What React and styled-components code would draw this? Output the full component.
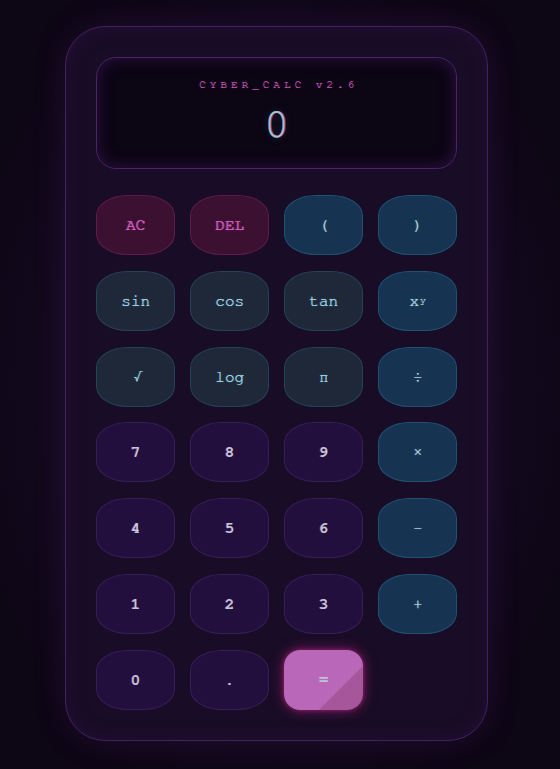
import React from 'react'
import styled, { createGlobalStyle } from 'styled-components'

const Global = createGlobalStyle`
  html, body {
    margin: 0;
    padding: 0;
    background: #0e0717;
  }
  #root {
    min-height: 769px;
  }
`

const mono = `'FreeMono', 'Liberation Mono', 'Courier New', monospace`

const Page = styled.div`
  min-height: 769px;
  box-sizing: border-box;
  padding: 26px 0 0 65px;
  background:
    radial-gradient(ellipse 320px 440px at 276px 384px, #1c0e2a 0%, #140a20 60%, #0d0615 100%);
  font-family: ${mono};
`

const Shell = styled.div`
  width: 423px;
  box-sizing: border-box;
  padding: 30px;
  border: 1.5px solid #44205e;
  border-radius: 40px;
  background: #190c26;
  box-shadow: 0 0 30px rgba(90, 30, 120, 0.25), inset 0 0 20px rgba(60, 20, 90, 0.3);
  display: flex;
  flex-direction: column;
  gap: 26px;
`

const Display = styled.div`
  height: 112px;
  box-sizing: border-box;
  border: 1px solid #4c2366;
  border-radius: 20px;
  background: #0b0514;
  box-shadow: inset 0 0 16px rgba(70, 25, 100, 0.6);
  display: flex;
  flex-direction: column;
  align-items: center;
  padding-top: 21px;
`

const Title = styled.div`
  font-size: 11px;
  line-height: 12px;
  letter-spacing: 4px;
  color: #c35ab5;
  margin-left: 4px;
  text-shadow: 0.4px 0 currentColor, 0 0 4px rgba(200, 80, 180, 0.4);
`

const Readout = styled.div`
  margin-top: 12px;
  font-size: 42px;
  line-height: 1;
  color: #a9c2cf;
  text-shadow: 1px 0 rgba(220, 70, 170, 0.7), -0.5px 0 rgba(140, 200, 220, 0.6),
    0 0 8px rgba(120, 200, 230, 0.25);
`

const Keys = styled.div`
  display: grid;
  grid-template-columns: repeat(4, 79px);
  grid-auto-rows: 60px;
  column-gap: 15px;
  row-gap: 15.8px;
`

const tones = {
  clear: { bg: '#3b1030', border: '#5e1c4c', color: '#cf5fbe', weight: 400, shadow: '0.7px 0 currentColor, -0.3px 0 currentColor, 0 0 4px rgba(210, 80, 190, 0.35)' },
  op: { bg: '#163451', border: '#1f5270', color: '#b0cedc', weight: 400, shadow: '0.5px 0 currentColor, 0 0 3px rgba(160, 210, 230, 0.3)' },
  fn: { bg: '#1f2838', border: '#22435a', color: '#9dd2e4', weight: 400, shadow: '0.5px 0 currentColor, 0 0 3px rgba(120, 200, 230, 0.3)' },
  num: { bg: '#230f3d', border: '#3a1c56', color: '#c0c9d9', weight: 700, shadow: '-1px 0 rgba(220, 80, 180, 0.45)' },
}

const Key = styled.button`
  appearance: none;
  margin: 0;
  padding: 0;
  border: 1px solid ${p => tones[p.$tone].border};
  border-radius: 40% / 34%;
  background: ${p => tones[p.$tone].bg};
  color: ${p => tones[p.$tone].color};
  font-family: ${mono};
  font-size: 16px;
  font-weight: ${p => tones[p.$tone].weight};
  display: flex;
  align-items: center;
  justify-content: center;
  text-shadow: ${p => tones[p.$tone].shadow};
  cursor: pointer;

  sup {
    font-size: 10px;
    margin-left: 1px;
    position: relative;
    top: -1px;
  }
`

const Equals = styled.button`
  appearance: none;
  margin: 0;
  padding: 0;
  border: none;
  border-radius: 16px;
  background: linear-gradient(135deg, #b867b9 0%, #b867b9 68%, #a6569a 68.5%, #a6569a 100%);
  color: #c0c4d4;
  font-family: ${mono};
  font-size: 17px;
  font-weight: 700;
  box-shadow: 0 0 14px rgba(200, 40, 140, 0.55), 0 0 4px rgba(160, 30, 100, 0.8);
  display: flex;
  align-items: center;
  justify-content: center;
  cursor: pointer;
`

const keys = [
  ['AC', 'clear'], ['DEL', 'clear'], ['(', 'op'], [')', 'op'],
  ['sin', 'fn'], ['cos', 'fn'], ['tan', 'fn'], ['xy', 'op'],
  ['√', 'fn'], ['log', 'fn'], ['π', 'fn'], ['÷', 'op'],
  ['7', 'num'], ['8', 'num'], ['9', 'num'], ['×', 'op'],
  ['4', 'num'], ['5', 'num'], ['6', 'num'], ['−', 'op'],
  ['1', 'num'], ['2', 'num'], ['3', 'num'], ['+', 'op'],
  ['0', 'num'], ['.', 'num'],
]

export default function App() {
  return (
    <>
      <Global />
      <Page>
        <Shell>
          <Display>
            <Title>CYBER_CALC v2.6</Title>
            <Readout>0</Readout>
          </Display>
          <Keys>
            {keys.map(([label, tone]) => (
              <Key key={label} $tone={tone}>
                {label === 'xy' ? <>x<sup>y</sup></> : label}
              </Key>
            ))}
            <Equals>=</Equals>
          </Keys>
        </Shell>
      </Page>
    </>
  )
}
